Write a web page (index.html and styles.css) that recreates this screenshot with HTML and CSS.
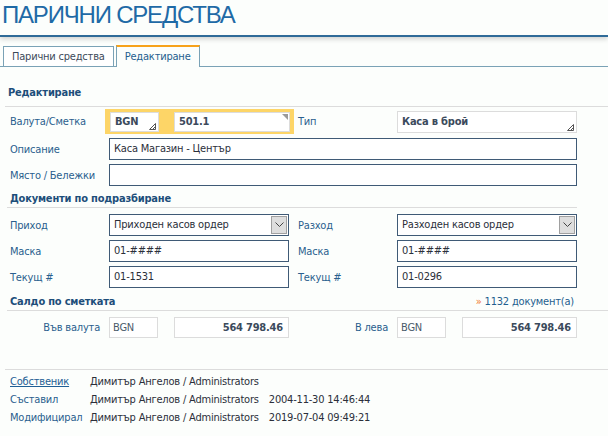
FILE: index.html
```html
<!DOCTYPE html>
<html lang="bg">
<head>
<meta charset="utf-8">
<title>Парични средства</title>
<link rel="stylesheet" href="styles.css">
</head>
<body>
<header class="page-title"><h1>ПАРИЧНИ СРЕДСТВА</h1></header>
<nav class="tabs">
  <a class="tab">Парични средства</a>
  <a class="tab tab-active">Редактиране</a>
</nav>
<main>
  <section>
    <h2 class="sec-head sec-head-edit">Редактиране</h2>
    <div class="grid grid-edit">
      <span class="lbl">Валута/Сметка</span>
      <div class="account-pick">
        <span class="pick pick-cur">BGN<svg class="grip" width="7" height="7" viewBox="0 0 7 7"><path d="M6.5 0.5V6.5H0.5Z M6.5 3.5L3.5 6.5" fill="none" stroke="#555" stroke-width="1"/></svg></span>
        <span class="pick pick-acc">501.1<span class="corner"></span></span>
      </div>
      <span class="lbl lbl-2">Тип</span>
      <span class="pick pick-type">Каса в брой<svg class="grip" width="7" height="7" viewBox="0 0 7 7"><path d="M6.5 0.5V6.5H0.5Z M6.5 3.5L3.5 6.5" fill="none" stroke="#555" stroke-width="1"/></svg></span>
      <span class="lbl">Описание</span>
      <span class="inp inp-wide">Каса Магазин - Център</span>
      <span class="lbl">Място / Бележки</span>
      <span class="inp inp-wide"></span>
    </div>
  </section>

  <section>
    <h2 class="sec-head sec-head-docs">Документи по подразбиране</h2>
    <div class="grid grid-docs">
      <span class="lbl">Приход</span>
      <div class="select"><span class="select-val">Приходен касов ордер</span><span class="select-btn"><svg width="9" height="6" viewBox="0 0 9 6"><path d="M0.5 0.5L4.5 4.5L8.5 0.5" fill="none" stroke="#444" stroke-width="1"/></svg></span></div>
      <span class="lbl lbl-2">Разход</span>
      <div class="select"><span class="select-val">Разходен касов ордер</span><span class="select-btn"><svg width="9" height="6" viewBox="0 0 9 6"><path d="M0.5 0.5L4.5 4.5L8.5 0.5" fill="none" stroke="#444" stroke-width="1"/></svg></span></div>
      <span class="lbl">Маска</span>
      <span class="inp">01-####</span>
      <span class="lbl lbl-2">Маска</span>
      <span class="inp">01-####</span>
      <span class="lbl">Текущ #</span>
      <span class="inp">01-1531</span>
      <span class="lbl lbl-2">Текущ #</span>
      <span class="inp">01-0296</span>
    </div>
  </section>

  <section>
    <div class="sec-head sec-head-saldo">
      <h2 class="sec-title">Салдо по сметката</h2>
      <a class="docs-link"><span class="raquo">»</span> 1132 документ(а)</a>
    </div>
    <div class="grid grid-saldo">
      <span class="lbl lbl-right">Във валута</span>
      <div class="saldo-pair"><span class="box box-cur">BGN</span><span class="box box-amt">564 798.46</span></div>
      <span class="lbl lbl-right">В лева</span>
      <div class="saldo-pair"><span class="box box-cur">BGN</span><span class="box box-amt">564 798.46</span></div>
    </div>
  </section>
</main>
<footer class="meta">
  <a class="meta-lbl meta-link">Собственик</a><span class="meta-val">Димитър Ангелов / Administrators</span><span class="meta-val"></span>
  <span class="meta-lbl">Съставил</span><span class="meta-val">Димитър Ангелов / Administrators</span><span class="meta-val">2004-11-30 14:46:44</span>
  <span class="meta-lbl">Модифицирал</span><span class="meta-val">Димитър Ангелов / Administrators</span><span class="meta-val">2019-07-04 09:49:21</span>
</footer>
</body>
</html>
```
FILE: styles.css
```css
* { box-sizing: border-box; }

body {
  margin: 0;
  background: #fcfefc;
  font-family: "DejaVu Sans Condensed", "DejaVu Sans", sans-serif;
  font-size: 11px;
  letter-spacing: -0.2px;
  color: #2b2f3a;
}

.page-title {
  height: 37px;
  border-bottom: 2px solid #2f6b98;
  box-shadow: 0 2px 5px rgba(0, 0, 0, 0.18);
}

.page-title h1 {
  margin: 0;
  padding-left: 2px;
  font: 24px/30px "Liberation Sans", Arial, sans-serif;
  letter-spacing: -1.2px;
  color: #1f6aa6;
}

.tabs {
  display: flex;
  align-items: flex-end;
  gap: 2px;
  margin-top: 9px;
  padding-left: 3px;
  height: 21px;
  border-bottom: 1px solid #7aa2b6;
}

.tab {
  display: block;
  height: 20px;
  padding: 0 8px;
  line-height: 19px;
  border: 1px solid #7aa2b6;
  border-bottom: none;
  background: #fff;
  color: #3d4a5a;
}

.tab-active {
  height: 22px;
  margin-bottom: -1px;
  border-top: 2px solid #f7a21b;
  line-height: 20px;
  color: #1f5f8f;
  background: #fcfefc;
}

.sec-head {
  margin: 0;
  font-size: 11px;
  font-weight: bold;
  line-height: 14px;
  color: #1d4e7a;
  border-bottom: 1px solid #dcdcdc;
}

.sec-head-edit {
  margin-left: 5px;
  padding: 19px 3px 6px;
}

.sec-head-docs {
  margin: 0 31px 0 7px;
  padding: 6px 3px 1px;
}

.sec-head-saldo {
  display: flex;
  justify-content: space-between;
  align-items: center;
  margin-left: 7px;
  padding: 7px 34px 1px 3px;
}

.sec-title {
  margin: 0;
  font-size: 11px;
  font-weight: bold;
}

.docs-link {
  font-weight: normal;
  color: #1f5f8f;
}

.raquo { color: #f0782a; }

.grid {
  display: grid;
  grid-template-columns: 104px 180px 108px 180px;
  align-items: center;
  row-gap: 4px;
  margin-left: 5px;
}

.grid-edit { margin-top: 2px; grid-template-rows: 25px 22px 22px; }
.grid-docs { margin-top: 6px; grid-template-rows: 22px 22px 22px; }
.grid-saldo { margin-top: 6px; }

.lbl {
  padding-left: 5px;
  color: #2a5f8e;
  white-space: nowrap;
}

.lbl-2 { padding-left: 9px; }

.lbl-right {
  text-align: right;
  padding: 0 9px 0 0;
}

.account-pick {
  display: flex;
  gap: 15px;
  width: 189px;
  height: 25px;
  margin-left: -4px;
  padding: 3px 4px 2px 5px;
  background: #fdd567;
}

.pick {
  position: relative;
  display: block;
  height: 20px;
  padding-left: 4px;
  line-height: 18px;
  border: 1px solid #dcdcdc;
  background: #fff;
  font-weight: bold;
  color: #3b4a5c;
}

.pick-cur { width: 49px; }
.pick-acc { width: 116px; }
.pick-type { height: 22px; line-height: 20px; }

.grip {
  position: absolute;
  right: 2px;
  bottom: 1px;
}

.corner {
  position: absolute;
  top: 1px;
  right: 1px;
  border-top: 6px solid #9a9a9a;
  border-left: 6px solid transparent;
}

.inp {
  display: block;
  height: 22px;
  padding: 0 4px;
  line-height: 20px;
  border: 1px solid #3f5a76;
  background: #fff;
  color: #2b2f3a;
}

.inp-wide { grid-column: 2 / 5; }

.select {
  display: flex;
  height: 22px;
  border: 1px solid #3f5a76;
  background: #fff;
}

.select-val {
  flex: 1;
  padding: 0 4px;
  line-height: 20px;
}

.select-btn {
  display: flex;
  align-items: center;
  justify-content: center;
  width: 16px;
  margin: 1px;
  border: 1px solid #a0a0a0;
  background: #dedede;
}

.saldo-pair {
  display: flex;
  gap: 16px;
}

.box {
  display: block;
  height: 21px;
  line-height: 19px;
  border: 1px solid #dcdcdc;
  background: #fff;
}

.box-cur {
  width: 49px;
  padding-left: 3px;
  color: #4a5a6a;
}

.box-amt {
  width: 115px;
  padding-right: 5px;
  text-align: right;
  font-weight: bold;
  color: #3b4a5c;
}

.meta {
  display: grid;
  grid-template-columns: 70px max-content max-content;
  column-gap: 10px;
  margin: 31px 0 0 5px;
  padding: 3px 0 0 5px;
  border-top: 1px solid #dcdcdc;
  line-height: 18px;
}

.meta-lbl { color: #2a5f8e; white-space: nowrap; }
.meta-link { color: #1f5f95; text-decoration: underline; }
.meta-val { color: #2b2f3a; }
```
